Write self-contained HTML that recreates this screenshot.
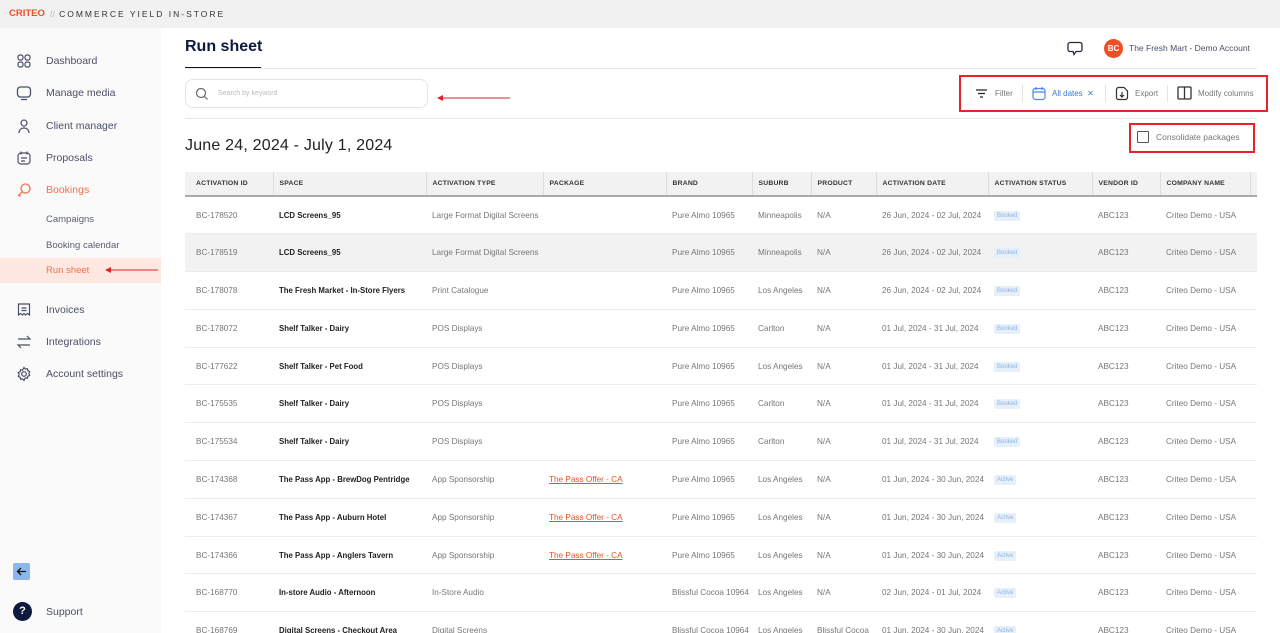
<!DOCTYPE html>
<html><head><meta charset="utf-8">
<style>
*{box-sizing:border-box;margin:0;padding:0}
body{width:1280px;height:633px;overflow:hidden;background:#fff;font-family:"Liberation Sans",sans-serif;color:#555;position:relative}
.top{position:absolute;left:0;top:0;width:1280px;height:28px;background:#f1f1f1}
.logo{position:absolute;left:9px;top:8px;font-size:9.5px;font-weight:bold;color:#f04e23;letter-spacing:0}
.logo2{position:absolute;left:50px;top:9px;font-size:8.5px;color:#333;letter-spacing:2px}
.logo2 span{color:#bbb;letter-spacing:0}
.side{position:absolute;left:0;top:28px;width:161px;height:605px;background:#fafafa}
.nav{position:absolute;left:46px;font-size:10.5px;color:#4a5068}
.ic{position:absolute;left:16px;width:16px;height:16px}
.sub{position:absolute;left:46px;font-size:9.5px;color:#5a5f70}
.active{position:absolute;left:0;top:258px;width:161px;height:25px;background:#fde8e1}
h1{position:absolute;left:185px;top:38px;font-size:16px;font-weight:bold;color:#0e1a3d}
.tabline{position:absolute;left:185px;top:67px;width:76px;height:2px;background:#111}
.hline{position:absolute;left:185px;height:1px;background:#e8e8e8}
.search{position:absolute;left:185px;top:79px;width:243px;height:29px;border:1px solid #e4e4e4;border-radius:8px}
.search span{position:absolute;left:32px;top:10px;font-size:7px;color:#bbb}
.redbox{position:absolute;border:2px solid #e8242b}
.tool{position:absolute;top:89px;font-size:8px;color:#777}
.date{position:absolute;left:185px;top:137px;font-size:16px;color:#222;letter-spacing:0.2px}
.wrap{position:absolute;left:185px;top:172px;width:1072px;height:461px;overflow:hidden}
table{border-collapse:collapse;table-layout:fixed;width:1100px}
th{height:24px;background:#f2f2f2;font-size:6.8px;font-weight:bold;color:#333;text-align:left;padding-left:6px;border-right:1px solid #ddd;border-bottom:2px solid #aaa;letter-spacing:0.2px}
td{height:37.8px;font-size:8.2px;color:#777;padding-left:6px;border-bottom:1px solid #ececec;white-space:nowrap;overflow:hidden}
th:first-child,td:first-child{padding-left:11px}
td.b{color:#222;font-weight:bold;font-size:7.8px}
tr.h td{background:#f2f2f2}
.pk{color:#f04e23;text-decoration:underline}
.bd{display:inline-block;background:#e6f0fb;color:#8fb3e0;font-size:6px;padding:2px 3px;border-radius:2px}
</style></head><body>
<div class="top"></div>
<div class="logo">CRITEO</div>
<div class="logo2"><span>//</span> COMMERCE YIELD IN-STORE</div>
<div class="side"></div>
<div class="active"></div>
<svg class="ic" style="top:53px" viewBox="0 0 16 16" fill="none" stroke="#4a5068" stroke-width="1.2"><rect x="2" y="2" width="5" height="5" rx="2"/><rect x="9" y="2" width="5" height="5" rx="2"/><rect x="2" y="9" width="5" height="5" rx="2"/><rect x="9" y="9" width="5" height="5" rx="2"/></svg>
<div class="nav" style="top:55px">Dashboard</div>
<svg class="ic" style="top:85px" viewBox="0 0 16 16" fill="none" stroke="#4a5068" stroke-width="1.3"><rect x="1.5" y="2" width="13" height="10" rx="3"/><path d="M5 14.5h6"/></svg>
<div class="nav" style="top:87px">Manage media</div>
<svg class="ic" style="top:118px" viewBox="0 0 16 16" fill="none" stroke="#4a5068" stroke-width="1.2"><circle cx="8" cy="5" r="3"/><path d="M3 15c0-3 2-5 5-5s5 2 5 5"/></svg>
<div class="nav" style="top:120px">Client manager</div>
<svg class="ic" style="top:150px" viewBox="0 0 16 16" fill="none" stroke="#4a5068" stroke-width="1.2"><rect x="2" y="3" width="12" height="11" rx="3"/><path d="M5 1.5v3M11 1.5v3M5 8h6M5 11h4"/></svg>
<div class="nav" style="top:152px">Proposals</div>
<svg class="ic" style="top:182px" viewBox="0 0 16 16" fill="none" stroke="#f0704a" stroke-width="1.3"><circle cx="9.5" cy="6.5" r="4.5"/><path d="M6 10l-4 4M3 13l1.5 1.5"/></svg>
<div class="nav" style="top:184px;color:#f0704a">Bookings</div>
<div class="sub" style="top:214px">Campaigns</div>
<div class="sub" style="top:240px">Booking calendar</div>
<div class="sub" style="top:265px;color:#f0704a">Run sheet</div>
<svg style="position:absolute;left:104px;top:265px" width="56" height="10"><path d="M2 5h52" stroke="#e2222a" stroke-width="1"/><path d="M1 5l6-3v6z" fill="#e2222a"/></svg>
<svg class="ic" style="top:302px" viewBox="0 0 16 16" fill="none" stroke="#4a5068" stroke-width="1.2"><path d="M2.5 2h11v11l-2-1.5-2 1.5-1.5-1.5-1.5 1.5-2-1.5-2 1.5z"/><path d="M5.5 6h5M5.5 8.5h5"/></svg>
<div class="nav" style="top:304px">Invoices</div>
<svg class="ic" style="top:334px" viewBox="0 0 16 16" fill="none" stroke="#4a5068" stroke-width="1.2"><path d="M2 5h12l-3-3M14 11H2l3 3"/></svg>
<div class="nav" style="top:336px">Integrations</div>
<svg class="ic" style="top:366px" viewBox="0 0 16 16" fill="none" stroke="#4a5068" stroke-width="1.2"><circle cx="8" cy="8" r="2.3"/><path d="M8 1.5l1.3 1.6 2-.4.5 2 1.9.9-.8 1.9.8 1.9-1.9.9-.5 2-2-.4L8 14.5l-1.3-1.6-2 .4-.5-2-1.9-.9.8-1.9-.8-1.9 1.9-.9.5-2 2 .4z"/></svg>
<div class="nav" style="top:368px">Account settings</div>
<div style="position:absolute;left:13px;top:563px;width:17px;height:17px;background:#8ab8ee;border-radius:2px"></div>
<svg style="position:absolute;left:15px;top:565px" width="13" height="13" viewBox="0 0 13 13" fill="none" stroke="#111" stroke-width="1.3"><path d="M11 6.5H2.5M6 3L2.5 6.5 6 10"/></svg>
<div style="position:absolute;left:13px;top:602px;width:19px;height:19px;border-radius:50%;background:#0e1a3d;color:#fff;font-size:11px;font-weight:bold;text-align:center;line-height:19px">?</div>
<div class="nav" style="top:606px">Support</div>

<h1>Run sheet</h1>
<div class="tabline"></div>
<div class="hline" style="top:68px;width:1072px"></div>
<svg style="position:absolute;left:1067px;top:41px" width="16" height="15" viewBox="0 0 16 15" fill="none" stroke="#1f2a44" stroke-width="1.3"><path d="M3 1.5h10a2 2 0 012 2v5a2 2 0 01-2 2H9l-2 3-1-3H3a2 2 0 01-2-2v-5a2 2 0 012-2z"/></svg>
<div style="position:absolute;left:1104px;top:39px;width:19px;height:19px;border-radius:50%;background:#f04e23;color:#fff;font-size:8px;font-weight:bold;text-align:center;line-height:19px">BC</div>
<div style="position:absolute;left:1129px;top:43px;font-size:8.5px;color:#4a5068">The Fresh Mart - Demo Account</div>

<div class="search"><svg style="position:absolute;left:9px;top:7px" width="14" height="14" viewBox="0 0 14 14" fill="none" stroke="#666" stroke-width="1.2"><circle cx="6" cy="6" r="4.5"/><path d="M9.5 9.5l3 3"/></svg><span>Search by keyword</span></div>
<svg style="position:absolute;left:436px;top:94px" width="74" height="8"><path d="M3 4h71" stroke="#e2222a"/><path d="M1 4l6-3v6z" fill="#e2222a"/></svg>
<div class="redbox" style="left:959px;top:75px;width:309px;height:37px"></div>
<svg style="position:absolute;left:975px;top:88px" width="13" height="11" fill="none" stroke="#222" stroke-width="1.3"><path d="M1 2h11M3 5.5h7M5 9h3"/></svg>
<div class="tool" style="left:995px">Filter</div>
<div style="position:absolute;left:1022px;top:85px;width:1px;height:17px;background:#e4e4e4"></div>
<svg style="position:absolute;left:1032px;top:86px" width="14" height="15" fill="none" stroke="#4a8ee0" stroke-width="1.2"><rect x="1" y="2.5" width="12" height="11" rx="2.5"/><path d="M4 1v3M10 1v3M1 6h12"/></svg>
<div class="tool" style="left:1052px;color:#3a7ad0">All dates &nbsp;✕</div>
<div style="position:absolute;left:1105px;top:85px;width:1px;height:17px;background:#e4e4e4"></div>
<svg style="position:absolute;left:1115px;top:86px" width="14" height="15" fill="none" stroke="#333" stroke-width="1.2"><path d="M4 1.5h5l3.5 3.5v6.5a2 2 0 01-2 2h-7a2 2 0 01-2-2v-8a2 2 0 012-2z"/><path d="M7 6v5M5 9l2 2 2-2"/></svg>
<div class="tool" style="left:1135px">Export</div>
<div style="position:absolute;left:1167px;top:85px;width:1px;height:17px;background:#e4e4e4"></div>
<svg style="position:absolute;left:1177px;top:86px" width="15" height="14" fill="none" stroke="#333" stroke-width="1.3"><rect x="1" y="1" width="13" height="12" rx="1"/><path d="M7.5 1v12"/></svg>
<div class="tool" style="left:1198px">Modify columns</div>
<div class="hline" style="top:118px;width:1072px"></div>
<div class="redbox" style="left:1129px;top:123px;width:126px;height:30px"></div>
<div style="position:absolute;left:1137px;top:131px;width:12px;height:12px;border:1.3px solid #555;border-radius:1px"></div>
<div style="position:absolute;left:1156px;top:132px;font-size:8.5px;color:#777">Consolidate packages</div>
<div class="date">June 24, 2024 - July 1, 2024</div>

<div class="wrap"><table>
<colgroup><col style="width:88px"><col style="width:153px"><col style="width:117px"><col style="width:123px"><col style="width:86px"><col style="width:59px"><col style="width:65px"><col style="width:112px"><col style="width:104px"><col style="width:68px"><col style="width:90px"><col style="width:35px"></colgroup>
<tr><th>ACTIVATION ID</th><th>SPACE</th><th>ACTIVATION TYPE</th><th>PACKAGE</th><th>BRAND</th><th>SUBURB</th><th>PRODUCT</th><th>ACTIVATION DATE</th><th>ACTIVATION STATUS</th><th>VENDOR ID</th><th>COMPANY NAME</th><th></th></tr>
<tr><td>BC-178520</td><td class="b">LCD Screens_95</td><td>Large Format Digital Screens</td><td></td><td>Pure Almo 10965</td><td>Minneapolis</td><td>N/A</td><td>26 Jun, 2024 - 02 Jul, 2024</td><td><span class="bd">Booked</span></td><td>ABC123</td><td>Criteo Demo - USA</td><td></td></tr>
<tr class="h"><td>BC-178519</td><td class="b">LCD Screens_95</td><td>Large Format Digital Screens</td><td></td><td>Pure Almo 10965</td><td>Minneapolis</td><td>N/A</td><td>26 Jun, 2024 - 02 Jul, 2024</td><td><span class="bd">Booked</span></td><td>ABC123</td><td>Criteo Demo - USA</td><td></td></tr>
<tr><td>BC-178078</td><td class="b">The Fresh Market - In-Store Flyers</td><td>Print Catalogue</td><td></td><td>Pure Almo 10965</td><td>Los Angeles</td><td>N/A</td><td>26 Jun, 2024 - 02 Jul, 2024</td><td><span class="bd">Booked</span></td><td>ABC123</td><td>Criteo Demo - USA</td><td></td></tr>
<tr><td>BC-178072</td><td class="b">Shelf Talker - Dairy</td><td>POS Displays</td><td></td><td>Pure Almo 10965</td><td>Carlton</td><td>N/A</td><td>01 Jul, 2024 - 31 Jul, 2024</td><td><span class="bd">Booked</span></td><td>ABC123</td><td>Criteo Demo - USA</td><td></td></tr>
<tr><td>BC-177622</td><td class="b">Shelf Talker - Pet Food</td><td>POS Displays</td><td></td><td>Pure Almo 10965</td><td>Los Angeles</td><td>N/A</td><td>01 Jul, 2024 - 31 Jul, 2024</td><td><span class="bd">Booked</span></td><td>ABC123</td><td>Criteo Demo - USA</td><td></td></tr>
<tr><td>BC-175535</td><td class="b">Shelf Talker - Dairy</td><td>POS Displays</td><td></td><td>Pure Almo 10965</td><td>Carlton</td><td>N/A</td><td>01 Jul, 2024 - 31 Jul, 2024</td><td><span class="bd">Booked</span></td><td>ABC123</td><td>Criteo Demo - USA</td><td></td></tr>
<tr><td>BC-175534</td><td class="b">Shelf Talker - Dairy</td><td>POS Displays</td><td></td><td>Pure Almo 10965</td><td>Carlton</td><td>N/A</td><td>01 Jul, 2024 - 31 Jul, 2024</td><td><span class="bd">Booked</span></td><td>ABC123</td><td>Criteo Demo - USA</td><td></td></tr>
<tr><td>BC-174368</td><td class="b">The Pass App - BrewDog Pentridge</td><td>App Sponsorship</td><td class="pk">The Pass Offer - CA</td><td>Pure Almo 10965</td><td>Los Angeles</td><td>N/A</td><td>01 Jun, 2024 - 30 Jun, 2024</td><td><span class="bd">Active</span></td><td>ABC123</td><td>Criteo Demo - USA</td><td></td></tr>
<tr><td>BC-174367</td><td class="b">The Pass App - Auburn Hotel</td><td>App Sponsorship</td><td class="pk">The Pass Offer - CA</td><td>Pure Almo 10965</td><td>Los Angeles</td><td>N/A</td><td>01 Jun, 2024 - 30 Jun, 2024</td><td><span class="bd">Active</span></td><td>ABC123</td><td>Criteo Demo - USA</td><td></td></tr>
<tr><td>BC-174366</td><td class="b">The Pass App - Anglers Tavern</td><td>App Sponsorship</td><td class="pk">The Pass Offer - CA</td><td>Pure Almo 10965</td><td>Los Angeles</td><td>N/A</td><td>01 Jun, 2024 - 30 Jun, 2024</td><td><span class="bd">Active</span></td><td>ABC123</td><td>Criteo Demo - USA</td><td></td></tr>
<tr><td>BC-168770</td><td class="b">In-store Audio - Afternoon</td><td>In-Store Audio</td><td></td><td>Blissful Cocoa 10964</td><td>Los Angeles</td><td>N/A</td><td>02 Jun, 2024 - 01 Jul, 2024</td><td><span class="bd">Active</span></td><td>ABC123</td><td>Criteo Demo - USA</td><td></td></tr>
<tr><td>BC-168769</td><td class="b">Digital Screens - Checkout Area</td><td>Digital Screens</td><td></td><td>Blissful Cocoa 10964</td><td>Los Angeles</td><td>Blissful Cocoa</td><td>01 Jun, 2024 - 30 Jun, 2024</td><td><span class="bd">Active</span></td><td>ABC123</td><td>Criteo Demo - USA</td><td></td></tr>
</table></div>
</body></html>
